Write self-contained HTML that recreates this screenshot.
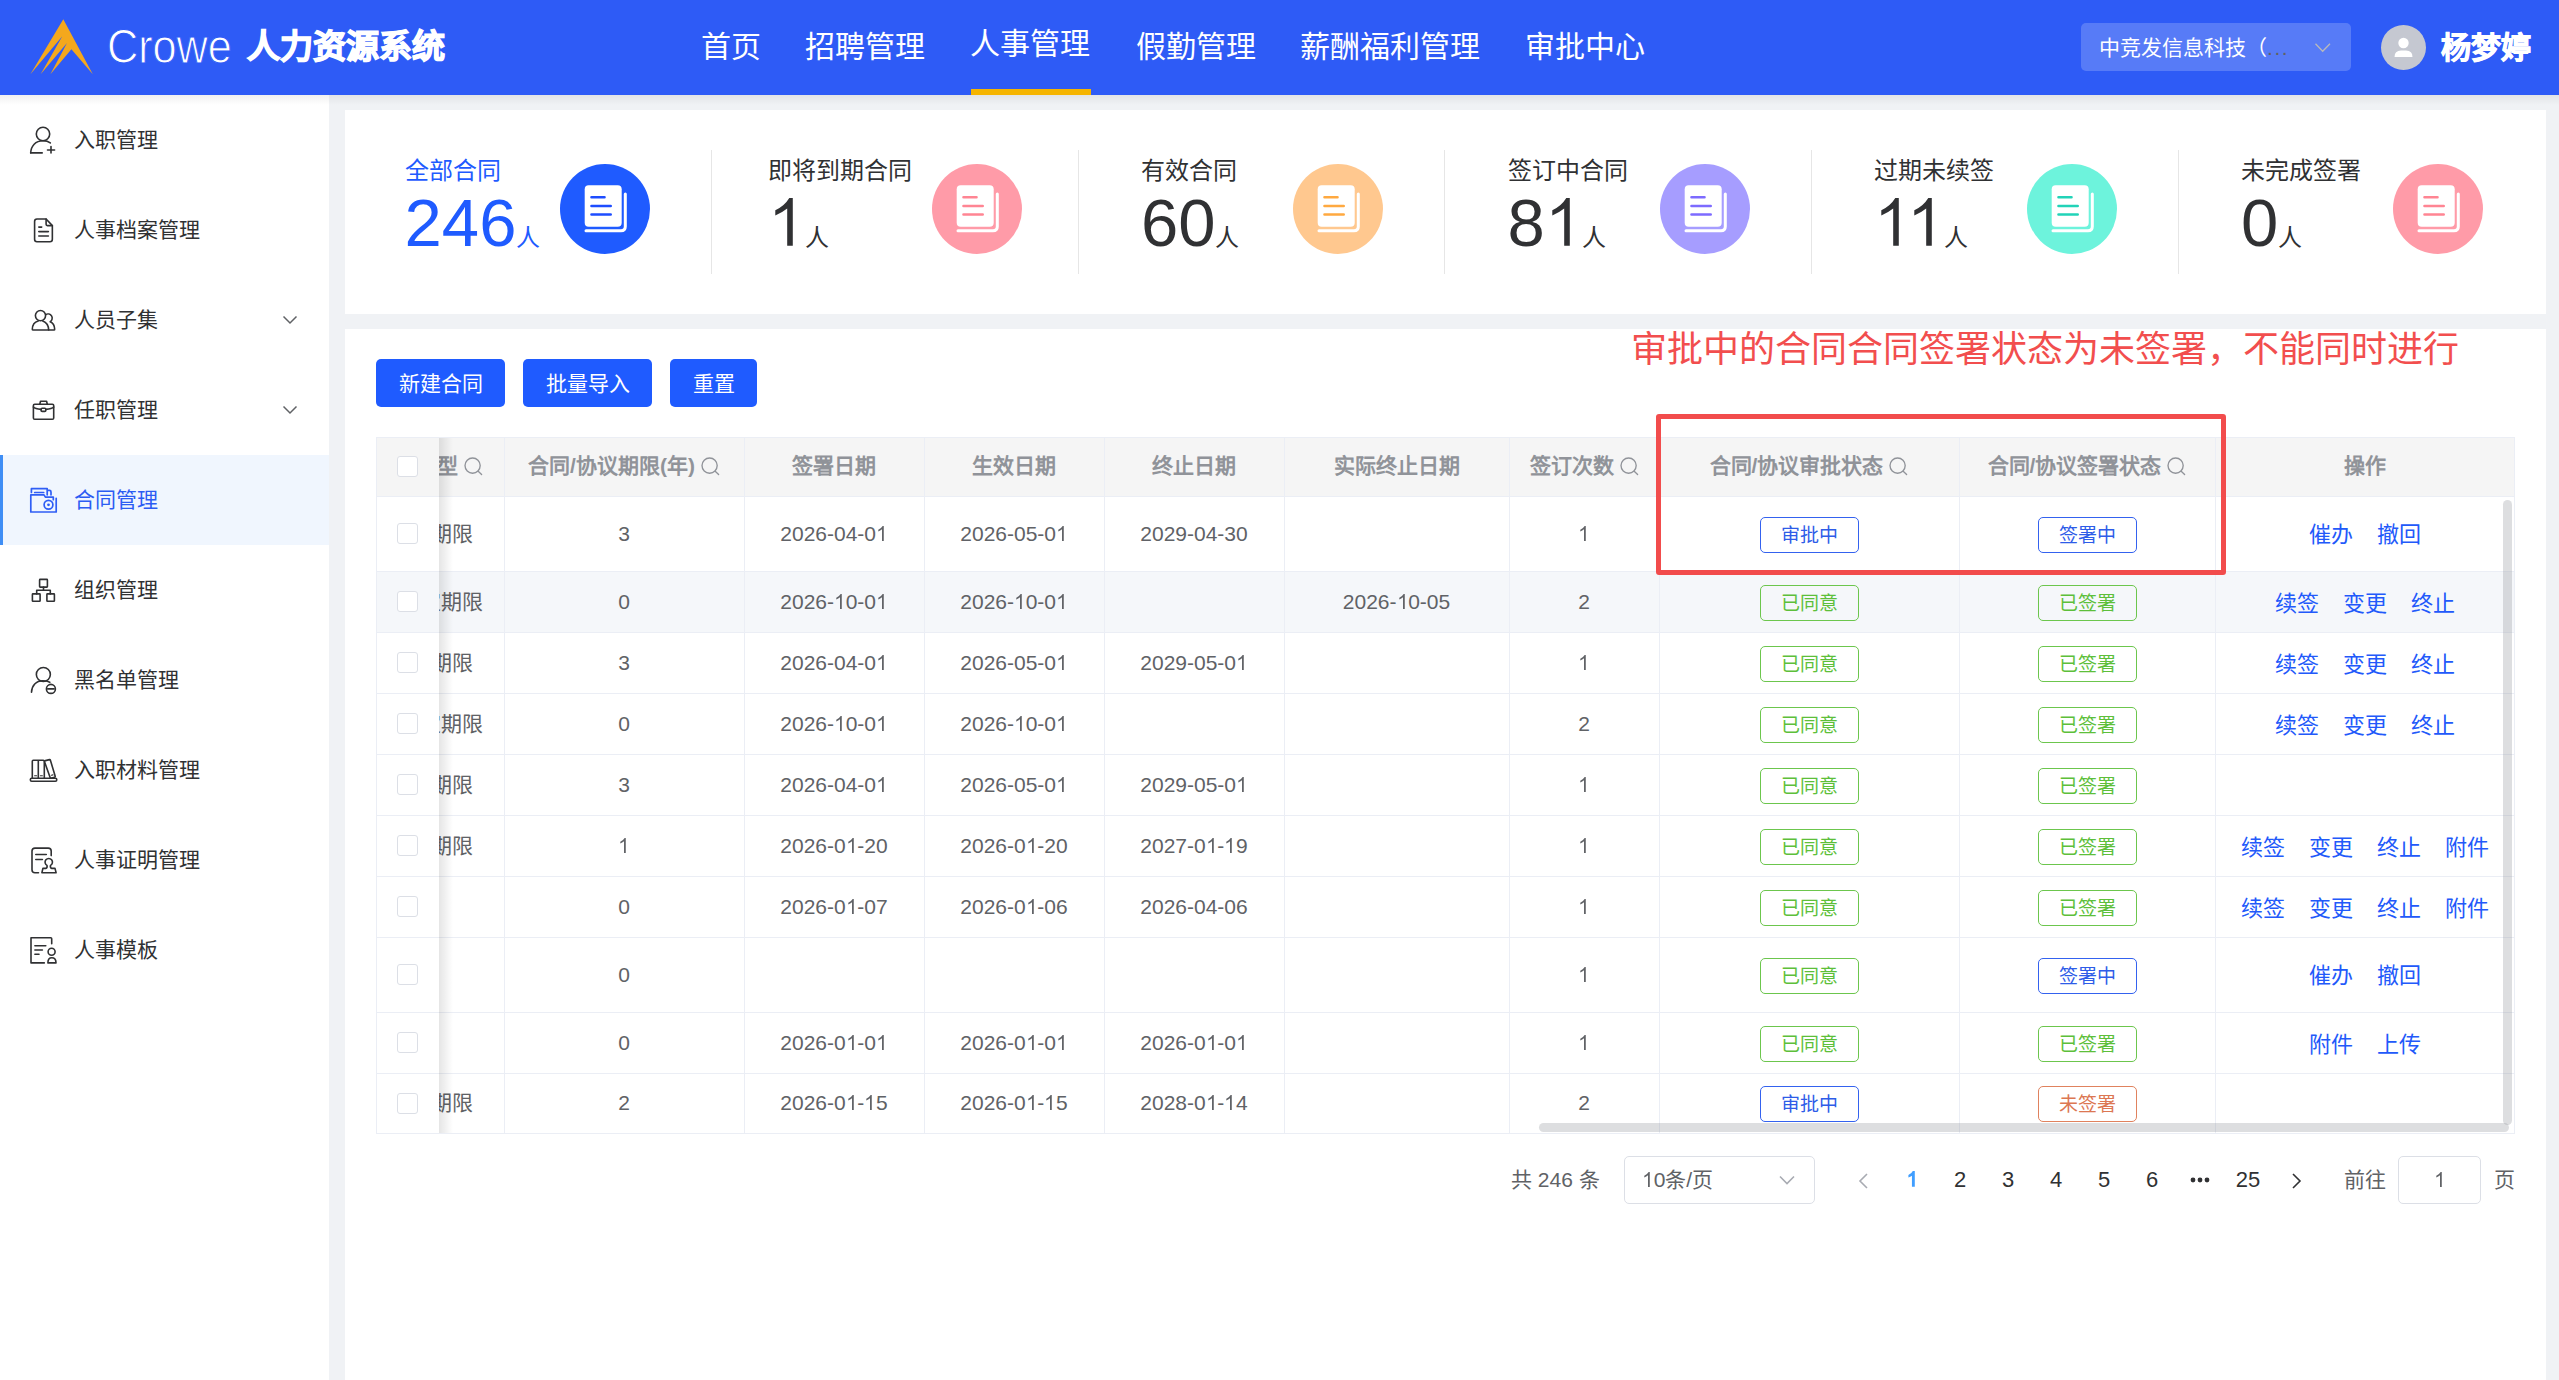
<!DOCTYPE html><html lang="zh-CN"><head><meta charset="utf-8"><style>
*{box-sizing:border-box;margin:0;padding:0}
html,body{width:2559px;height:1380px;overflow:hidden}
body{background:#f0f2f5;font-family:"Liberation Sans",sans-serif;position:relative;color:#303133}
.a{position:absolute;white-space:nowrap}
#hdr{position:absolute;left:0;top:0;width:2559px;height:95px;background:#2e5bf6}
.nav{position:absolute;top:0;height:95px;line-height:95px;font-size:30px;color:#fff}
#side{position:absolute;left:0;top:95px;width:329px;height:1285px;background:#fff}
.si{position:absolute;left:0;width:329px;height:90px}
.si .t{position:absolute;left:74px;top:0;line-height:90px;font-size:21px;color:#303133}
.si svg{position:absolute}
.card{position:absolute;background:#fff}
.lbl{font-size:24px;color:#303133;line-height:24px}
.num{font-size:70px;line-height:70px;color:#303133}
.ren{font-size:24px}
.circ{position:absolute;width:90px;height:90px;border-radius:50%}
.btn{position:absolute;top:359px;height:48px;line-height:50px;background:#1f5bff;color:#fff;font-size:21px;text-align:center;border-radius:5px}
.cell{position:absolute;text-align:center;font-size:21px;color:#606266;white-space:nowrap}
.hl{position:absolute;height:1px;background:#ebeef5}
.vl{position:absolute;width:1px;background:#ebeef5}
.tag{position:absolute;width:99px;height:36px;line-height:35px;border:1.5px solid;border-radius:5px;text-align:center;font-size:19px}
.tg{color:#5dbf3a;border-color:#6cc64d}
.tb{color:#2e5ce8;border-color:#3462ef}
.to{color:#dc7752;border-color:#e0825e}
.op{position:absolute;font-size:22px;color:#2e5bf0}
.cb{position:absolute;left:397px;width:21px;height:21px;border:1px solid #dcdfe6;border-radius:3px;background:#fff}
.pg{position:absolute;top:1156px;height:48px;line-height:48px;font-size:22px;color:#303133;text-align:center}
</style></head><body>
<div id="hdr">
<svg class="a" style="left:0;top:0" width="100" height="95" viewBox="0 0 100 95">
<path fill="#f4a81d" d="M63.3 19.2 L92.8 74.3 L71.4 49.3 L50.4 74.3 L67 43.1 L40.6 74.3 L62.3 36.2 L30.4 74.3 Z"/>
</svg>
<div class="a" style="left:107px;top:20px;font-size:48px;line-height:54px;color:#fff;transform:scaleX(0.9);transform-origin:0 0;-webkit-text-stroke:1px #2e5bf6">Crowe</div>
<div class="a" style="left:247px;top:27px;font-size:33px;line-height:40px;color:#fff;font-weight:bold;-webkit-text-stroke:1.3px #fff">人力资源系统</div>
<div class="nav" style="left:701.0px;top:-1px;">首页</div>
<div class="nav" style="left:805.0px;top:-1px;">招聘管理</div>
<div class="nav" style="left:970.0px;top:-4px;">人事管理</div>
<div class="nav" style="left:1135.5px;top:-1px;">假勤管理</div>
<div class="nav" style="left:1299.5px;top:-1px;">薪酬福利管理</div>
<div class="nav" style="left:1524.5px;top:-1px;">审批中心</div>
<div class="a" style="left:971px;top:89px;width:120px;height:6px;background:#f5b400"></div>
<div class="a" style="left:2081px;top:23px;width:270px;height:48px;border-radius:5px;background:rgba(255,255,255,0.2)"></div>
<div class="a" style="left:2099px;top:24px;line-height:48px;font-size:21px;color:#fff">中竞发信息科技（<span style="color:#626262;letter-spacing:1.6px">...</span></div>
<svg class="a" style="left:2314px;top:42px" width="18" height="12" viewBox="0 0 18 12"><path d="M1.5 1.8 L8.7 9.3 L16 1.8" fill="none" stroke="#b9b9bb" stroke-width="1.3"/></svg>
<div class="a" style="left:2381px;top:25px;width:45px;height:45px;border-radius:50%;background:#c5c8d1"></div>
<svg class="a" style="left:2381px;top:25px" width="45" height="45" viewBox="0 0 45 45"><circle cx="22.5" cy="18" r="5.2" fill="#fff"/><path d="M13.5 32 Q13.5 25.5 20 25.5 L25 25.5 Q31.5 25.5 31.5 32 Z" fill="#fff"/></svg>
<div class="a" style="left:2441px;top:25px;line-height:46px;font-size:30px;color:#fff;font-weight:bold;-webkit-text-stroke:0.9px #fff">杨梦婷</div>
</div>
<div class="a" style="left:0;top:95px;width:2559px;height:10px;background:linear-gradient(rgba(0,0,0,0.06),rgba(0,0,0,0));z-index:5"></div>
<div id="side">
<div class="si" style="top:0px">
<svg style="left:26px;top:27px" width="36" height="36" viewBox="0 0 36 36"><g fill="none" stroke="#303133" stroke-width="1.6" stroke-linecap="round" stroke-linejoin="round"><circle cx="17" cy="12" r="6.7"/><path d="M4.7 30.9 C5 24 9.5 18.7 17 18.7 Q21.5 18.7 24.3 20.9"/><path d="M4.7 30.9 H16.2"/><path d="M25 24.6 V31 M21.5 28 H28.6"/></g></svg>
<div class="t">入职管理</div>
</div>
<div class="si" style="top:90px">
<svg style="left:26px;top:27px" width="36" height="36" viewBox="0 0 36 36"><g fill="none" stroke="#303133" stroke-width="1.6" stroke-linecap="round" stroke-linejoin="round"><path d="M20.1 7 H11 Q8.6 7 8.6 9.4 V27.3 Q8.6 29.7 11 29.7 H24 Q26.35 29.7 26.35 27.3 V13.6 Z"/><path d="M20.1 7 V12.3 Q20.1 13.6 21.4 13.6 H26.35"/><path d="M12.8 15.1 H15.7 M12.8 19.6 H22.4 M12.8 24 H22.4"/></g></svg>
<div class="t">人事档案管理</div>
</div>
<div class="si" style="top:180px">
<svg style="left:26px;top:27px" width="36" height="36" viewBox="0 0 36 36"><g fill="none" stroke="#303133" stroke-width="1.6" stroke-linecap="round" stroke-linejoin="round"><circle cx="14.5" cy="13.6" r="5.1"/><path d="M12.2 19 Q6.5 20.5 6.3 27.3 Q6.3 28 7.3 28 H22.7 Q22.4 21 16.8 19"/><path d="M19.7 12.6 A4.2 4.2 0 1 1 24.2 19.8 Q28.5 21.5 28.7 27.3 Q28.7 28 28 28 H22.7"/></g></svg>
<div class="t">人员子集</div>
<svg style="left:282px;top:39px" width="16" height="12" viewBox="0 0 16 12"><path d="M1.5 2.5 L8 9 L14.5 2.5" fill="none" stroke="#606266" stroke-width="1.5"/></svg>
</div>
<div class="si" style="top:270px">
<svg style="left:26px;top:27px" width="36" height="36" viewBox="0 0 36 36"><g fill="none" stroke="#303133" stroke-width="1.6" stroke-linecap="round" stroke-linejoin="round"><rect x="7.4" y="12.3" width="20.3" height="15" rx="1.3"/><path d="M13.8 12.3 L14.5 9.3 H20.6 L21.3 12.3"/><path d="M7.4 15.1 Q9 16.6 15.1 17.4 M19.8 17.4 Q26 16.6 27.7 15.1"/><rect x="15.1" y="16.3" width="4.7" height="3.1" rx="1"/></g></svg>
<div class="t">任职管理</div>
<svg style="left:282px;top:39px" width="16" height="12" viewBox="0 0 16 12"><path d="M1.5 2.5 L8 9 L14.5 2.5" fill="none" stroke="#606266" stroke-width="1.5"/></svg>
</div>
<div class="si" style="top:360px;background:#f0f6fe">
<div class="a" style="left:0;top:0;width:3px;height:90px;background:#3f8ef5"></div>
<svg style="left:26px;top:27px" width="36" height="36" viewBox="0 0 36 36"><g fill="none" stroke="#2f5ef5" stroke-width="1.7" stroke-linejoin="round" stroke-linecap="round"><path d="M27.3 17.7 V15.1 H19.4 L18 12.9 H4.8 V30 H30.2 V16.3"/><path d="M5.4 10.5 V6.7 H21.2 V12.8 M21.2 8.4 H23.5 Q25 8.4 25 10 V12.8"/><path d="M8.7 10.5 H17.7"/><circle cx="22.5" cy="22.8" r="4.4"/></g><circle cx="22.5" cy="22.8" r="1.4" fill="#2f5ef5"/></svg>
<div class="t" style="color:#2b5cf3">合同管理</div></div>
<div class="si" style="top:450px">
<svg style="left:26px;top:27px" width="36" height="36" viewBox="0 0 36 36"><g fill="none" stroke="#303133" stroke-width="1.6" stroke-linecap="round" stroke-linejoin="round"><rect x="13.6" y="7.4" width="7.8" height="7.7" rx="0.6"/><rect x="6.4" y="21.9" width="7.7" height="7.4" rx="0.6"/><rect x="20.9" y="21.9" width="7.5" height="7.4" rx="0.6"/><path d="M17.5 15.1 V18.3 M10.7 21.9 V18.3 H24.3 V21.9"/></g></svg>
<div class="t">组织管理</div>
</div>
<div class="si" style="top:540px">
<svg style="left:26px;top:27px" width="36" height="36" viewBox="0 0 36 36"><g fill="none" stroke="#303133" stroke-width="1.6" stroke-linecap="round" stroke-linejoin="round"><circle cx="17.35" cy="12.5" r="7"/><path d="M5.5 30.3 C5.8 23.5 10 18.8 17 18.8 Q21 18.8 23.8 20.3"/><circle cx="24.9" cy="26.9" r="4.5"/><path d="M21.7 26.9 H28.1"/></g></svg>
<div class="t">黑名单管理</div>
</div>
<div class="si" style="top:630px">
<svg style="left:26px;top:27px" width="36" height="36" viewBox="0 0 36 36"><g fill="none" stroke="#303133" stroke-width="1.6" stroke-linecap="round" stroke-linejoin="round"><rect x="4.3" y="26.3" width="26.5" height="2.9" rx="1.4"/><path d="M6.3 26.3 V9.3 Q6.3 8.3 7.3 8.3 H17.3 Q18.3 8.3 18.3 9.3 V26.3 M12.3 8.3 V26.3"/><path d="M18.5 9.7 Q18.7 8.8 19.4 8.6 L23.5 7.6 Q24.2 7.5 24.4 8.2 L29.2 24.3 Q29.3 25 28.6 25.2 L25.6 26 M18.5 9.7 L24.3 26.1"/><path d="M8.6 23.7 H10.6 M14.4 23.7 H16.4 M25.4 23.3 L27 22.9" stroke-width="1.1"/></g></svg>
<div class="t">入职材料管理</div>
</div>
<div class="si" style="top:720px">
<svg style="left:26px;top:27px" width="36" height="36" viewBox="0 0 36 36"><g fill="none" stroke="#303133" stroke-width="1.6" stroke-linecap="round" stroke-linejoin="round"><path d="M12.5 30.8 H9 Q6 30.8 6 27.8 V9.1 Q6 6.1 9 6.1 H22.2 Q25.2 6.1 25.2 9.1 V13.6"/><path d="M9.8 12.5 H20.3 M9.8 17.5 H16.4"/><path d="M21 23.4 A3.7 3.7 0 1 1 24.5 23.4 Q23.9 25.9 25.8 26.4 H29 L30.1 30.8 H15.9 L16.9 26.4 H19.7 Q21.6 25.9 21 23.4 Z"/></g></svg>
<div class="t">人事证明管理</div>
</div>
<div class="si" style="top:810px">
<svg style="left:26px;top:27px" width="36" height="36" viewBox="0 0 36 36"><g fill="none" stroke="#303133" stroke-width="1.6" stroke-linecap="round" stroke-linejoin="round"><path d="M18.3 30.9 H5 V5.7 H24.7 Q25.7 5.7 25.7 6.7 V11.7"/><path d="M8.9 13.8 H19.8 M8.9 18 H16.4 M8.9 22.3 H13"/><circle cx="25.6" cy="19.7" r="3.5"/><path d="M21.9 30.9 Q21.9 25.8 25.8 25.8 Q30 25.8 30 30.9 Z"/></g></svg>
<div class="t">人事模板</div>
</div>
</div>
<div class="card" style="left:345px;top:110px;width:2201px;height:204px">
<div class="a" style="left:-0.8px;top:0;width:366.8px;height:204px;display:flex;justify-content:center;align-items:flex-start;padding-top:54px">
<div style="position:relative;min-width:132px;height:90px;margin-right:22px;left:-1px">
<div class="lbl a" style="left:0;top:-5px;color:#1f5bff">全部合同</div>
<div class="a" style="left:0px;top:24px;color:#1f5bff;line-height:70px;font-size:67px"><span>2</span><span>4</span><span>6</span><span class="ren">人</span></div>
<div style="visibility:hidden;font-size:24px">全部合同</div>
</div>
<div style="position:relative;width:90px;height:90px;border-radius:50%;background:#1f5bff"><svg class="a" style="left:0;top:0" width="90" height="90" viewBox="0 0 90 90"><rect x="24.7" y="21.3" width="37" height="41.5" rx="4" fill="#fff"/><path d="M65.3 30 V62.5 Q65.3 66.8 61 66.8 H26" fill="none" stroke="#fff" stroke-width="3" stroke-linecap="round"/><path d="M31.5 33.3 H44.5 M31.5 42 H50.7 M31.5 50.5 H50.7" fill="none" stroke="#1e4dff" stroke-width="2.6" stroke-linecap="round"/></svg></div>
</div>
<div class="a" style="left:366px;top:40px;width:1px;height:124px;background:#e6e6e6"></div>
<div class="a" style="left:366.0px;top:0;width:366.8px;height:204px;display:flex;justify-content:center;align-items:flex-start;padding-top:54px">
<div style="position:relative;min-width:132px;height:90px;margin-right:22px;left:1.7px">
<div class="lbl a" style="left:0;top:-5px;color:#303133">即将到期合同</div>
<div class="a" style="left:0px;top:24px;color:#303133;line-height:70px;font-size:67px"><svg style="display:inline-block;vertical-align:baseline;" width="37.2" height="47.7" viewBox="0 0 37.2 47.7"><path transform="translate(7.3 0)" d="M17.5 0 V47.7 H11.9 V10.5 Q6.5 14.8 0 17.5 V12.2 Q9 8.2 14 0 Z" fill="#303133"/></svg><span class="ren">人</span></div>
<div style="visibility:hidden;font-size:24px">即将到期合同</div>
</div>
<div style="position:relative;width:90px;height:90px;border-radius:50%;background:#ff9ba8"><svg class="a" style="left:0;top:0" width="90" height="90" viewBox="0 0 90 90"><rect x="24.7" y="21.3" width="37" height="41.5" rx="4" fill="#fff"/><path d="M65.3 30 V62.5 Q65.3 66.8 61 66.8 H26" fill="none" stroke="#fff" stroke-width="3" stroke-linecap="round"/><path d="M31.5 33.3 H44.5 M31.5 42 H50.7 M31.5 50.5 H50.7" fill="none" stroke="#ff8593" stroke-width="2.6" stroke-linecap="round"/></svg></div>
</div>
<div class="a" style="left:733px;top:40px;width:1px;height:124px;background:#e6e6e6"></div>
<div class="a" style="left:732.8px;top:0;width:366.8px;height:204px;display:flex;justify-content:center;align-items:flex-start;padding-top:54px">
<div style="position:relative;min-width:132px;height:90px;margin-right:22px;left:1.7px">
<div class="lbl a" style="left:0;top:-5px;color:#303133">有效合同</div>
<div class="a" style="left:0px;top:24px;color:#303133;line-height:70px;font-size:67px"><span>6</span><span>0</span><span class="ren">人</span></div>
<div style="visibility:hidden;font-size:24px">有效合同</div>
</div>
<div style="position:relative;width:90px;height:90px;border-radius:50%;background:#ffc88f"><svg class="a" style="left:0;top:0" width="90" height="90" viewBox="0 0 90 90"><rect x="24.7" y="21.3" width="37" height="41.5" rx="4" fill="#fff"/><path d="M65.3 30 V62.5 Q65.3 66.8 61 66.8 H26" fill="none" stroke="#fff" stroke-width="3" stroke-linecap="round"/><path d="M31.5 33.3 H44.5 M31.5 42 H50.7 M31.5 50.5 H50.7" fill="none" stroke="#ffa940" stroke-width="2.6" stroke-linecap="round"/></svg></div>
</div>
<div class="a" style="left:1099px;top:40px;width:1px;height:124px;background:#e6e6e6"></div>
<div class="a" style="left:1099.5px;top:0;width:366.8px;height:204px;display:flex;justify-content:center;align-items:flex-start;padding-top:54px">
<div style="position:relative;min-width:132px;height:90px;margin-right:22px;left:1.7px">
<div class="lbl a" style="left:0;top:-5px;color:#303133">签订中合同</div>
<div class="a" style="left:0px;top:24px;color:#303133;line-height:70px;font-size:67px"><span>8</span><svg style="display:inline-block;vertical-align:baseline;" width="37.2" height="47.7" viewBox="0 0 37.2 47.7"><path transform="translate(7.3 0)" d="M17.5 0 V47.7 H11.9 V10.5 Q6.5 14.8 0 17.5 V12.2 Q9 8.2 14 0 Z" fill="#303133"/></svg><span class="ren">人</span></div>
<div style="visibility:hidden;font-size:24px">签订中合同</div>
</div>
<div style="position:relative;width:90px;height:90px;border-radius:50%;background:#a69dff"><svg class="a" style="left:0;top:0" width="90" height="90" viewBox="0 0 90 90"><rect x="24.7" y="21.3" width="37" height="41.5" rx="4" fill="#fff"/><path d="M65.3 30 V62.5 Q65.3 66.8 61 66.8 H26" fill="none" stroke="#fff" stroke-width="3" stroke-linecap="round"/><path d="M31.5 33.3 H44.5 M31.5 42 H50.7 M31.5 50.5 H50.7" fill="none" stroke="#7d6bff" stroke-width="2.6" stroke-linecap="round"/></svg></div>
</div>
<div class="a" style="left:1466px;top:40px;width:1px;height:124px;background:#e6e6e6"></div>
<div class="a" style="left:1466.2px;top:0;width:366.8px;height:204px;display:flex;justify-content:center;align-items:flex-start;padding-top:54px">
<div style="position:relative;min-width:132px;height:90px;margin-right:22px;left:1.7px">
<div class="lbl a" style="left:0;top:-5px;color:#303133">过期未续签</div>
<div class="a" style="left:0px;top:24px;color:#303133;line-height:70px;font-size:67px"><svg style="display:inline-block;vertical-align:baseline;" width="37.2" height="47.7" viewBox="0 0 37.2 47.7"><path transform="translate(7.3 0)" d="M17.5 0 V47.7 H11.9 V10.5 Q6.5 14.8 0 17.5 V12.2 Q9 8.2 14 0 Z" fill="#303133"/></svg><svg style="display:inline-block;vertical-align:baseline;margin-left:-4.9px;" width="37.2" height="47.7" viewBox="0 0 37.2 47.7"><path transform="translate(7.3 0)" d="M17.5 0 V47.7 H11.9 V10.5 Q6.5 14.8 0 17.5 V12.2 Q9 8.2 14 0 Z" fill="#303133"/></svg><span class="ren">人</span></div>
<div style="visibility:hidden;font-size:24px">过期未续签</div>
</div>
<div style="position:relative;width:90px;height:90px;border-radius:50%;background:#6df3dc"><svg class="a" style="left:0;top:0" width="90" height="90" viewBox="0 0 90 90"><rect x="24.7" y="21.3" width="37" height="41.5" rx="4" fill="#fff"/><path d="M65.3 30 V62.5 Q65.3 66.8 61 66.8 H26" fill="none" stroke="#fff" stroke-width="3" stroke-linecap="round"/><path d="M31.5 33.3 H44.5 M31.5 42 H50.7 M31.5 50.5 H50.7" fill="none" stroke="#22d3b8" stroke-width="2.6" stroke-linecap="round"/></svg></div>
</div>
<div class="a" style="left:1833px;top:40px;width:1px;height:124px;background:#e6e6e6"></div>
<div class="a" style="left:1833.0px;top:0;width:366.8px;height:204px;display:flex;justify-content:center;align-items:flex-start;padding-top:54px">
<div style="position:relative;min-width:132px;height:90px;margin-right:22px;left:1.7px">
<div class="lbl a" style="left:0;top:-5px;color:#303133">未完成签署</div>
<div class="a" style="left:0px;top:24px;color:#303133;line-height:70px;font-size:67px"><span>0</span><span class="ren">人</span></div>
<div style="visibility:hidden;font-size:24px">未完成签署</div>
</div>
<div style="position:relative;width:90px;height:90px;border-radius:50%;background:#ff9ba8"><svg class="a" style="left:0;top:0" width="90" height="90" viewBox="0 0 90 90"><rect x="24.7" y="21.3" width="37" height="41.5" rx="4" fill="#fff"/><path d="M65.3 30 V62.5 Q65.3 66.8 61 66.8 H26" fill="none" stroke="#fff" stroke-width="3" stroke-linecap="round"/><path d="M31.5 33.3 H44.5 M31.5 42 H50.7 M31.5 50.5 H50.7" fill="none" stroke="#ff8593" stroke-width="2.6" stroke-linecap="round"/></svg></div>
</div>
</div>
<div class="card" style="left:345px;top:329px;width:2201px;height:1100px"></div>
<div class="btn" style="left:376px;width:129px">新建合同</div>
<div class="btn" style="left:523px;width:129px">批量导入</div>
<div class="btn" style="left:670px;width:87px">重置</div>
<div class="a" style="left:1631px;top:328px;font-size:36px;line-height:44px;color:#f24e4e">审批中的合同合同签署状态为未签署，不能同时进行</div>
<div class="a" style="left:376px;top:437px;width:2138px;height:59px;background:#f5f5f5"></div>
<div class="a" style="left:376px;top:571px;width:2138px;height:61px;background:#f5f7fa"></div>
<div class="hl" style="left:376px;top:437px;width:2139px"></div>
<div class="hl" style="left:376px;top:496px;width:2139px"></div>
<div class="hl" style="left:376px;top:571px;width:2139px"></div>
<div class="hl" style="left:376px;top:632px;width:2139px"></div>
<div class="hl" style="left:376px;top:693px;width:2139px"></div>
<div class="hl" style="left:376px;top:754px;width:2139px"></div>
<div class="hl" style="left:376px;top:815px;width:2139px"></div>
<div class="hl" style="left:376px;top:876px;width:2139px"></div>
<div class="hl" style="left:376px;top:937px;width:2139px"></div>
<div class="hl" style="left:376px;top:1012px;width:2139px"></div>
<div class="hl" style="left:376px;top:1073px;width:2139px"></div>
<div class="hl" style="left:376px;top:1133px;width:2139px"></div>
<div class="vl" style="left:376px;top:437px;height:696px"></div>
<div class="vl" style="left:504px;top:437px;height:696px"></div>
<div class="vl" style="left:744px;top:437px;height:696px"></div>
<div class="vl" style="left:924px;top:437px;height:696px"></div>
<div class="vl" style="left:1104px;top:437px;height:696px"></div>
<div class="vl" style="left:1284px;top:437px;height:696px"></div>
<div class="vl" style="left:1509px;top:437px;height:696px"></div>
<div class="vl" style="left:1659px;top:437px;height:696px"></div>
<div class="vl" style="left:1959px;top:437px;height:696px"></div>
<div class="vl" style="left:2215px;top:437px;height:696px"></div>
<div class="vl" style="left:2514px;top:437px;height:696px"></div>
<div class="cell" style="left:504px;top:437px;width:240px;line-height:57px;font-weight:bold;color:#909399">合同/协议期限(年)<svg style="display:inline-block;vertical-align:-3px;margin-left:6px" width="19" height="19" viewBox="0 0 19 19"><circle cx="8.6" cy="8.6" r="7.6" fill="none" stroke="#909399" stroke-width="1.35"/><path d="M14.2 14.3 L17.6 17.5" stroke="#909399" stroke-width="1.35" stroke-linecap="round"/></svg></div>
<div class="cell" style="left:744px;top:437px;width:180px;line-height:57px;font-weight:bold;color:#909399">签署日期</div>
<div class="cell" style="left:924px;top:437px;width:180px;line-height:57px;font-weight:bold;color:#909399">生效日期</div>
<div class="cell" style="left:1104px;top:437px;width:180px;line-height:57px;font-weight:bold;color:#909399">终止日期</div>
<div class="cell" style="left:1284px;top:437px;width:225px;line-height:57px;font-weight:bold;color:#909399">实际终止日期</div>
<div class="cell" style="left:1509px;top:437px;width:150px;line-height:57px;font-weight:bold;color:#909399">签订次数<svg style="display:inline-block;vertical-align:-3px;margin-left:6px" width="19" height="19" viewBox="0 0 19 19"><circle cx="8.6" cy="8.6" r="7.6" fill="none" stroke="#909399" stroke-width="1.35"/><path d="M14.2 14.3 L17.6 17.5" stroke="#909399" stroke-width="1.35" stroke-linecap="round"/></svg></div>
<div class="cell" style="left:1659px;top:437px;width:300px;line-height:57px;font-weight:bold;color:#909399">合同/协议审批状态<svg style="display:inline-block;vertical-align:-3px;margin-left:6px" width="19" height="19" viewBox="0 0 19 19"><circle cx="8.6" cy="8.6" r="7.6" fill="none" stroke="#909399" stroke-width="1.35"/><path d="M14.2 14.3 L17.6 17.5" stroke="#909399" stroke-width="1.35" stroke-linecap="round"/></svg></div>
<div class="cell" style="left:1959px;top:437px;width:256px;line-height:57px;font-weight:bold;color:#909399">合同/协议签署状态<svg style="display:inline-block;vertical-align:-3px;margin-left:6px" width="19" height="19" viewBox="0 0 19 19"><circle cx="8.6" cy="8.6" r="7.6" fill="none" stroke="#909399" stroke-width="1.35"/><path d="M14.2 14.3 L17.6 17.5" stroke="#909399" stroke-width="1.35" stroke-linecap="round"/></svg></div>
<div class="cell" style="left:2215px;top:437px;width:299px;line-height:57px;font-weight:bold;color:#909399">操作</div>
<div class="cell" style="left:439px;top:437px;width:65px;height:59px;overflow:hidden"><div style="position:absolute;right:21px;top:0;line-height:57px;font-weight:bold;color:#909399">类型<svg style="display:inline-block;vertical-align:-3px;margin-left:6px" width="19" height="19" viewBox="0 0 19 19"><circle cx="8.6" cy="8.6" r="7.6" fill="none" stroke="#909399" stroke-width="1.35"/><path d="M14.2 14.3 L17.6 17.5" stroke="#909399" stroke-width="1.35" stroke-linecap="round"/></svg></div></div>
<div class="cb" style="top:456px"></div>
<div class="cb" style="top:523.0px"></div>
<div class="cell" style="left:439px;top:496px;width:65px;height:75px;overflow:hidden"><div style="position:absolute;right:31.0px;top:0;line-height:75px">固定期限</div></div>
<div class="cell" style="left:504px;top:496px;width:240px;line-height:75px">3</div>
<div class="cell" style="left:744px;top:496px;width:180px;line-height:75px">2026-04-0<svg style="display:inline-block;vertical-align:baseline" width="11.68" height="14.95" viewBox="0 0 37.25 47.7"><path transform="translate(7.3 0)" d="M17.5 0 V47.7 H11.9 V10.5 Q6.5 14.8 0 17.5 V12.2 Q9 8.2 14 0 Z" fill="currentColor"/></svg></div>
<div class="cell" style="left:924px;top:496px;width:180px;line-height:75px">2026-05-0<svg style="display:inline-block;vertical-align:baseline" width="11.68" height="14.95" viewBox="0 0 37.25 47.7"><path transform="translate(7.3 0)" d="M17.5 0 V47.7 H11.9 V10.5 Q6.5 14.8 0 17.5 V12.2 Q9 8.2 14 0 Z" fill="currentColor"/></svg></div>
<div class="cell" style="left:1104px;top:496px;width:180px;line-height:75px">2029-04-30</div>
<div class="cell" style="left:1509px;top:496px;width:150px;line-height:75px"><svg style="display:inline-block;vertical-align:baseline" width="11.68" height="14.95" viewBox="0 0 37.25 47.7"><path transform="translate(7.3 0)" d="M17.5 0 V47.7 H11.9 V10.5 Q6.5 14.8 0 17.5 V12.2 Q9 8.2 14 0 Z" fill="currentColor"/></svg></div>
<div class="tag tb" style="left:1759.5px;top:516.5px">审批中</div>
<div class="tag tb" style="left:2037.5px;top:516.5px">签署中</div>
<div class="a" style="left:2215px;top:494.5px;width:299px;height:75px;display:flex;justify-content:center;align-items:center;gap:24px;font-size:22px;color:#2259fa;padding-bottom:1px"><span>催办</span><span>撤回</span></div>
<div class="cb" style="top:591.0px"></div>
<div class="cell" style="left:439px;top:571px;width:65px;height:61px;overflow:hidden"><div style="position:absolute;right:21.5px;top:0;line-height:61px">无固定期限</div></div>
<div class="cell" style="left:504px;top:571px;width:240px;line-height:61px">0</div>
<div class="cell" style="left:744px;top:571px;width:180px;line-height:61px">2026-<svg style="display:inline-block;vertical-align:baseline" width="11.68" height="14.95" viewBox="0 0 37.25 47.7"><path transform="translate(7.3 0)" d="M17.5 0 V47.7 H11.9 V10.5 Q6.5 14.8 0 17.5 V12.2 Q9 8.2 14 0 Z" fill="currentColor"/></svg>0-0<svg style="display:inline-block;vertical-align:baseline" width="11.68" height="14.95" viewBox="0 0 37.25 47.7"><path transform="translate(7.3 0)" d="M17.5 0 V47.7 H11.9 V10.5 Q6.5 14.8 0 17.5 V12.2 Q9 8.2 14 0 Z" fill="currentColor"/></svg></div>
<div class="cell" style="left:924px;top:571px;width:180px;line-height:61px">2026-<svg style="display:inline-block;vertical-align:baseline" width="11.68" height="14.95" viewBox="0 0 37.25 47.7"><path transform="translate(7.3 0)" d="M17.5 0 V47.7 H11.9 V10.5 Q6.5 14.8 0 17.5 V12.2 Q9 8.2 14 0 Z" fill="currentColor"/></svg>0-0<svg style="display:inline-block;vertical-align:baseline" width="11.68" height="14.95" viewBox="0 0 37.25 47.7"><path transform="translate(7.3 0)" d="M17.5 0 V47.7 H11.9 V10.5 Q6.5 14.8 0 17.5 V12.2 Q9 8.2 14 0 Z" fill="currentColor"/></svg></div>
<div class="cell" style="left:1284px;top:571px;width:225px;line-height:61px">2026-<svg style="display:inline-block;vertical-align:baseline" width="11.68" height="14.95" viewBox="0 0 37.25 47.7"><path transform="translate(7.3 0)" d="M17.5 0 V47.7 H11.9 V10.5 Q6.5 14.8 0 17.5 V12.2 Q9 8.2 14 0 Z" fill="currentColor"/></svg>0-05</div>
<div class="cell" style="left:1509px;top:571px;width:150px;line-height:61px">2</div>
<div class="tag tg" style="left:1759.5px;top:584.5px">已同意</div>
<div class="tag tg" style="left:2037.5px;top:584.5px">已签署</div>
<div class="a" style="left:2215px;top:571.0px;width:299px;height:61px;display:flex;justify-content:center;align-items:center;gap:24px;font-size:22px;color:#2259fa;padding-bottom:1px"><span>续签</span><span>变更</span><span>终止</span></div>
<div class="cb" style="top:652.0px"></div>
<div class="cell" style="left:439px;top:632px;width:65px;height:61px;overflow:hidden"><div style="position:absolute;right:31.0px;top:0;line-height:61px">固定期限</div></div>
<div class="cell" style="left:504px;top:632px;width:240px;line-height:61px">3</div>
<div class="cell" style="left:744px;top:632px;width:180px;line-height:61px">2026-04-0<svg style="display:inline-block;vertical-align:baseline" width="11.68" height="14.95" viewBox="0 0 37.25 47.7"><path transform="translate(7.3 0)" d="M17.5 0 V47.7 H11.9 V10.5 Q6.5 14.8 0 17.5 V12.2 Q9 8.2 14 0 Z" fill="currentColor"/></svg></div>
<div class="cell" style="left:924px;top:632px;width:180px;line-height:61px">2026-05-0<svg style="display:inline-block;vertical-align:baseline" width="11.68" height="14.95" viewBox="0 0 37.25 47.7"><path transform="translate(7.3 0)" d="M17.5 0 V47.7 H11.9 V10.5 Q6.5 14.8 0 17.5 V12.2 Q9 8.2 14 0 Z" fill="currentColor"/></svg></div>
<div class="cell" style="left:1104px;top:632px;width:180px;line-height:61px">2029-05-0<svg style="display:inline-block;vertical-align:baseline" width="11.68" height="14.95" viewBox="0 0 37.25 47.7"><path transform="translate(7.3 0)" d="M17.5 0 V47.7 H11.9 V10.5 Q6.5 14.8 0 17.5 V12.2 Q9 8.2 14 0 Z" fill="currentColor"/></svg></div>
<div class="cell" style="left:1509px;top:632px;width:150px;line-height:61px"><svg style="display:inline-block;vertical-align:baseline" width="11.68" height="14.95" viewBox="0 0 37.25 47.7"><path transform="translate(7.3 0)" d="M17.5 0 V47.7 H11.9 V10.5 Q6.5 14.8 0 17.5 V12.2 Q9 8.2 14 0 Z" fill="currentColor"/></svg></div>
<div class="tag tg" style="left:1759.5px;top:645.5px">已同意</div>
<div class="tag tg" style="left:2037.5px;top:645.5px">已签署</div>
<div class="a" style="left:2215px;top:632.0px;width:299px;height:61px;display:flex;justify-content:center;align-items:center;gap:24px;font-size:22px;color:#2259fa;padding-bottom:1px"><span>续签</span><span>变更</span><span>终止</span></div>
<div class="cb" style="top:713.0px"></div>
<div class="cell" style="left:439px;top:693px;width:65px;height:61px;overflow:hidden"><div style="position:absolute;right:21.5px;top:0;line-height:61px">无固定期限</div></div>
<div class="cell" style="left:504px;top:693px;width:240px;line-height:61px">0</div>
<div class="cell" style="left:744px;top:693px;width:180px;line-height:61px">2026-<svg style="display:inline-block;vertical-align:baseline" width="11.68" height="14.95" viewBox="0 0 37.25 47.7"><path transform="translate(7.3 0)" d="M17.5 0 V47.7 H11.9 V10.5 Q6.5 14.8 0 17.5 V12.2 Q9 8.2 14 0 Z" fill="currentColor"/></svg>0-0<svg style="display:inline-block;vertical-align:baseline" width="11.68" height="14.95" viewBox="0 0 37.25 47.7"><path transform="translate(7.3 0)" d="M17.5 0 V47.7 H11.9 V10.5 Q6.5 14.8 0 17.5 V12.2 Q9 8.2 14 0 Z" fill="currentColor"/></svg></div>
<div class="cell" style="left:924px;top:693px;width:180px;line-height:61px">2026-<svg style="display:inline-block;vertical-align:baseline" width="11.68" height="14.95" viewBox="0 0 37.25 47.7"><path transform="translate(7.3 0)" d="M17.5 0 V47.7 H11.9 V10.5 Q6.5 14.8 0 17.5 V12.2 Q9 8.2 14 0 Z" fill="currentColor"/></svg>0-0<svg style="display:inline-block;vertical-align:baseline" width="11.68" height="14.95" viewBox="0 0 37.25 47.7"><path transform="translate(7.3 0)" d="M17.5 0 V47.7 H11.9 V10.5 Q6.5 14.8 0 17.5 V12.2 Q9 8.2 14 0 Z" fill="currentColor"/></svg></div>
<div class="cell" style="left:1509px;top:693px;width:150px;line-height:61px">2</div>
<div class="tag tg" style="left:1759.5px;top:706.5px">已同意</div>
<div class="tag tg" style="left:2037.5px;top:706.5px">已签署</div>
<div class="a" style="left:2215px;top:693.0px;width:299px;height:61px;display:flex;justify-content:center;align-items:center;gap:24px;font-size:22px;color:#2259fa;padding-bottom:1px"><span>续签</span><span>变更</span><span>终止</span></div>
<div class="cb" style="top:774.0px"></div>
<div class="cell" style="left:439px;top:754px;width:65px;height:61px;overflow:hidden"><div style="position:absolute;right:31.0px;top:0;line-height:61px">固定期限</div></div>
<div class="cell" style="left:504px;top:754px;width:240px;line-height:61px">3</div>
<div class="cell" style="left:744px;top:754px;width:180px;line-height:61px">2026-04-0<svg style="display:inline-block;vertical-align:baseline" width="11.68" height="14.95" viewBox="0 0 37.25 47.7"><path transform="translate(7.3 0)" d="M17.5 0 V47.7 H11.9 V10.5 Q6.5 14.8 0 17.5 V12.2 Q9 8.2 14 0 Z" fill="currentColor"/></svg></div>
<div class="cell" style="left:924px;top:754px;width:180px;line-height:61px">2026-05-0<svg style="display:inline-block;vertical-align:baseline" width="11.68" height="14.95" viewBox="0 0 37.25 47.7"><path transform="translate(7.3 0)" d="M17.5 0 V47.7 H11.9 V10.5 Q6.5 14.8 0 17.5 V12.2 Q9 8.2 14 0 Z" fill="currentColor"/></svg></div>
<div class="cell" style="left:1104px;top:754px;width:180px;line-height:61px">2029-05-0<svg style="display:inline-block;vertical-align:baseline" width="11.68" height="14.95" viewBox="0 0 37.25 47.7"><path transform="translate(7.3 0)" d="M17.5 0 V47.7 H11.9 V10.5 Q6.5 14.8 0 17.5 V12.2 Q9 8.2 14 0 Z" fill="currentColor"/></svg></div>
<div class="cell" style="left:1509px;top:754px;width:150px;line-height:61px"><svg style="display:inline-block;vertical-align:baseline" width="11.68" height="14.95" viewBox="0 0 37.25 47.7"><path transform="translate(7.3 0)" d="M17.5 0 V47.7 H11.9 V10.5 Q6.5 14.8 0 17.5 V12.2 Q9 8.2 14 0 Z" fill="currentColor"/></svg></div>
<div class="tag tg" style="left:1759.5px;top:767.5px">已同意</div>
<div class="tag tg" style="left:2037.5px;top:767.5px">已签署</div>
<div class="cb" style="top:835.0px"></div>
<div class="cell" style="left:439px;top:815px;width:65px;height:61px;overflow:hidden"><div style="position:absolute;right:31.0px;top:0;line-height:61px">固定期限</div></div>
<div class="cell" style="left:504px;top:815px;width:240px;line-height:61px"><svg style="display:inline-block;vertical-align:baseline" width="11.68" height="14.95" viewBox="0 0 37.25 47.7"><path transform="translate(7.3 0)" d="M17.5 0 V47.7 H11.9 V10.5 Q6.5 14.8 0 17.5 V12.2 Q9 8.2 14 0 Z" fill="currentColor"/></svg></div>
<div class="cell" style="left:744px;top:815px;width:180px;line-height:61px">2026-0<svg style="display:inline-block;vertical-align:baseline" width="11.68" height="14.95" viewBox="0 0 37.25 47.7"><path transform="translate(7.3 0)" d="M17.5 0 V47.7 H11.9 V10.5 Q6.5 14.8 0 17.5 V12.2 Q9 8.2 14 0 Z" fill="currentColor"/></svg>-20</div>
<div class="cell" style="left:924px;top:815px;width:180px;line-height:61px">2026-0<svg style="display:inline-block;vertical-align:baseline" width="11.68" height="14.95" viewBox="0 0 37.25 47.7"><path transform="translate(7.3 0)" d="M17.5 0 V47.7 H11.9 V10.5 Q6.5 14.8 0 17.5 V12.2 Q9 8.2 14 0 Z" fill="currentColor"/></svg>-20</div>
<div class="cell" style="left:1104px;top:815px;width:180px;line-height:61px">2027-0<svg style="display:inline-block;vertical-align:baseline" width="11.68" height="14.95" viewBox="0 0 37.25 47.7"><path transform="translate(7.3 0)" d="M17.5 0 V47.7 H11.9 V10.5 Q6.5 14.8 0 17.5 V12.2 Q9 8.2 14 0 Z" fill="currentColor"/></svg>-<svg style="display:inline-block;vertical-align:baseline" width="11.68" height="14.95" viewBox="0 0 37.25 47.7"><path transform="translate(7.3 0)" d="M17.5 0 V47.7 H11.9 V10.5 Q6.5 14.8 0 17.5 V12.2 Q9 8.2 14 0 Z" fill="currentColor"/></svg>9</div>
<div class="cell" style="left:1509px;top:815px;width:150px;line-height:61px"><svg style="display:inline-block;vertical-align:baseline" width="11.68" height="14.95" viewBox="0 0 37.25 47.7"><path transform="translate(7.3 0)" d="M17.5 0 V47.7 H11.9 V10.5 Q6.5 14.8 0 17.5 V12.2 Q9 8.2 14 0 Z" fill="currentColor"/></svg></div>
<div class="tag tg" style="left:1759.5px;top:828.5px">已同意</div>
<div class="tag tg" style="left:2037.5px;top:828.5px">已签署</div>
<div class="a" style="left:2215px;top:815.0px;width:299px;height:61px;display:flex;justify-content:center;align-items:center;gap:24px;font-size:22px;color:#2259fa;padding-bottom:1px"><span>续签</span><span>变更</span><span>终止</span><span>附件</span></div>
<div class="cb" style="top:896.0px"></div>
<div class="cell" style="left:504px;top:876px;width:240px;line-height:61px">0</div>
<div class="cell" style="left:744px;top:876px;width:180px;line-height:61px">2026-0<svg style="display:inline-block;vertical-align:baseline" width="11.68" height="14.95" viewBox="0 0 37.25 47.7"><path transform="translate(7.3 0)" d="M17.5 0 V47.7 H11.9 V10.5 Q6.5 14.8 0 17.5 V12.2 Q9 8.2 14 0 Z" fill="currentColor"/></svg>-07</div>
<div class="cell" style="left:924px;top:876px;width:180px;line-height:61px">2026-0<svg style="display:inline-block;vertical-align:baseline" width="11.68" height="14.95" viewBox="0 0 37.25 47.7"><path transform="translate(7.3 0)" d="M17.5 0 V47.7 H11.9 V10.5 Q6.5 14.8 0 17.5 V12.2 Q9 8.2 14 0 Z" fill="currentColor"/></svg>-06</div>
<div class="cell" style="left:1104px;top:876px;width:180px;line-height:61px">2026-04-06</div>
<div class="cell" style="left:1509px;top:876px;width:150px;line-height:61px"><svg style="display:inline-block;vertical-align:baseline" width="11.68" height="14.95" viewBox="0 0 37.25 47.7"><path transform="translate(7.3 0)" d="M17.5 0 V47.7 H11.9 V10.5 Q6.5 14.8 0 17.5 V12.2 Q9 8.2 14 0 Z" fill="currentColor"/></svg></div>
<div class="tag tg" style="left:1759.5px;top:889.5px">已同意</div>
<div class="tag tg" style="left:2037.5px;top:889.5px">已签署</div>
<div class="a" style="left:2215px;top:876.0px;width:299px;height:61px;display:flex;justify-content:center;align-items:center;gap:24px;font-size:22px;color:#2259fa;padding-bottom:1px"><span>续签</span><span>变更</span><span>终止</span><span>附件</span></div>
<div class="cb" style="top:964.0px"></div>
<div class="cell" style="left:504px;top:937px;width:240px;line-height:75px">0</div>
<div class="cell" style="left:1509px;top:937px;width:150px;line-height:75px"><svg style="display:inline-block;vertical-align:baseline" width="11.68" height="14.95" viewBox="0 0 37.25 47.7"><path transform="translate(7.3 0)" d="M17.5 0 V47.7 H11.9 V10.5 Q6.5 14.8 0 17.5 V12.2 Q9 8.2 14 0 Z" fill="currentColor"/></svg></div>
<div class="tag tg" style="left:1759.5px;top:957.5px">已同意</div>
<div class="tag tb" style="left:2037.5px;top:957.5px">签署中</div>
<div class="a" style="left:2215px;top:935.5px;width:299px;height:75px;display:flex;justify-content:center;align-items:center;gap:24px;font-size:22px;color:#2259fa;padding-bottom:1px"><span>催办</span><span>撤回</span></div>
<div class="cb" style="top:1032.0px"></div>
<div class="cell" style="left:504px;top:1012px;width:240px;line-height:61px">0</div>
<div class="cell" style="left:744px;top:1012px;width:180px;line-height:61px">2026-0<svg style="display:inline-block;vertical-align:baseline" width="11.68" height="14.95" viewBox="0 0 37.25 47.7"><path transform="translate(7.3 0)" d="M17.5 0 V47.7 H11.9 V10.5 Q6.5 14.8 0 17.5 V12.2 Q9 8.2 14 0 Z" fill="currentColor"/></svg>-0<svg style="display:inline-block;vertical-align:baseline" width="11.68" height="14.95" viewBox="0 0 37.25 47.7"><path transform="translate(7.3 0)" d="M17.5 0 V47.7 H11.9 V10.5 Q6.5 14.8 0 17.5 V12.2 Q9 8.2 14 0 Z" fill="currentColor"/></svg></div>
<div class="cell" style="left:924px;top:1012px;width:180px;line-height:61px">2026-0<svg style="display:inline-block;vertical-align:baseline" width="11.68" height="14.95" viewBox="0 0 37.25 47.7"><path transform="translate(7.3 0)" d="M17.5 0 V47.7 H11.9 V10.5 Q6.5 14.8 0 17.5 V12.2 Q9 8.2 14 0 Z" fill="currentColor"/></svg>-0<svg style="display:inline-block;vertical-align:baseline" width="11.68" height="14.95" viewBox="0 0 37.25 47.7"><path transform="translate(7.3 0)" d="M17.5 0 V47.7 H11.9 V10.5 Q6.5 14.8 0 17.5 V12.2 Q9 8.2 14 0 Z" fill="currentColor"/></svg></div>
<div class="cell" style="left:1104px;top:1012px;width:180px;line-height:61px">2026-0<svg style="display:inline-block;vertical-align:baseline" width="11.68" height="14.95" viewBox="0 0 37.25 47.7"><path transform="translate(7.3 0)" d="M17.5 0 V47.7 H11.9 V10.5 Q6.5 14.8 0 17.5 V12.2 Q9 8.2 14 0 Z" fill="currentColor"/></svg>-0<svg style="display:inline-block;vertical-align:baseline" width="11.68" height="14.95" viewBox="0 0 37.25 47.7"><path transform="translate(7.3 0)" d="M17.5 0 V47.7 H11.9 V10.5 Q6.5 14.8 0 17.5 V12.2 Q9 8.2 14 0 Z" fill="currentColor"/></svg></div>
<div class="cell" style="left:1509px;top:1012px;width:150px;line-height:61px"><svg style="display:inline-block;vertical-align:baseline" width="11.68" height="14.95" viewBox="0 0 37.25 47.7"><path transform="translate(7.3 0)" d="M17.5 0 V47.7 H11.9 V10.5 Q6.5 14.8 0 17.5 V12.2 Q9 8.2 14 0 Z" fill="currentColor"/></svg></div>
<div class="tag tg" style="left:1759.5px;top:1025.5px">已同意</div>
<div class="tag tg" style="left:2037.5px;top:1025.5px">已签署</div>
<div class="a" style="left:2215px;top:1012.0px;width:299px;height:61px;display:flex;justify-content:center;align-items:center;gap:24px;font-size:22px;color:#2259fa;padding-bottom:1px"><span>附件</span><span>上传</span></div>
<div class="cb" style="top:1092.5px"></div>
<div class="cell" style="left:439px;top:1073px;width:65px;height:60px;overflow:hidden"><div style="position:absolute;right:31.0px;top:0;line-height:60px">固定期限</div></div>
<div class="cell" style="left:504px;top:1073px;width:240px;line-height:60px">2</div>
<div class="cell" style="left:744px;top:1073px;width:180px;line-height:60px">2026-0<svg style="display:inline-block;vertical-align:baseline" width="11.68" height="14.95" viewBox="0 0 37.25 47.7"><path transform="translate(7.3 0)" d="M17.5 0 V47.7 H11.9 V10.5 Q6.5 14.8 0 17.5 V12.2 Q9 8.2 14 0 Z" fill="currentColor"/></svg>-<svg style="display:inline-block;vertical-align:baseline" width="11.68" height="14.95" viewBox="0 0 37.25 47.7"><path transform="translate(7.3 0)" d="M17.5 0 V47.7 H11.9 V10.5 Q6.5 14.8 0 17.5 V12.2 Q9 8.2 14 0 Z" fill="currentColor"/></svg>5</div>
<div class="cell" style="left:924px;top:1073px;width:180px;line-height:60px">2026-0<svg style="display:inline-block;vertical-align:baseline" width="11.68" height="14.95" viewBox="0 0 37.25 47.7"><path transform="translate(7.3 0)" d="M17.5 0 V47.7 H11.9 V10.5 Q6.5 14.8 0 17.5 V12.2 Q9 8.2 14 0 Z" fill="currentColor"/></svg>-<svg style="display:inline-block;vertical-align:baseline" width="11.68" height="14.95" viewBox="0 0 37.25 47.7"><path transform="translate(7.3 0)" d="M17.5 0 V47.7 H11.9 V10.5 Q6.5 14.8 0 17.5 V12.2 Q9 8.2 14 0 Z" fill="currentColor"/></svg>5</div>
<div class="cell" style="left:1104px;top:1073px;width:180px;line-height:60px">2028-0<svg style="display:inline-block;vertical-align:baseline" width="11.68" height="14.95" viewBox="0 0 37.25 47.7"><path transform="translate(7.3 0)" d="M17.5 0 V47.7 H11.9 V10.5 Q6.5 14.8 0 17.5 V12.2 Q9 8.2 14 0 Z" fill="currentColor"/></svg>-<svg style="display:inline-block;vertical-align:baseline" width="11.68" height="14.95" viewBox="0 0 37.25 47.7"><path transform="translate(7.3 0)" d="M17.5 0 V47.7 H11.9 V10.5 Q6.5 14.8 0 17.5 V12.2 Q9 8.2 14 0 Z" fill="currentColor"/></svg>4</div>
<div class="cell" style="left:1509px;top:1073px;width:150px;line-height:60px">2</div>
<div class="tag tb" style="left:1759.5px;top:1086.0px">审批中</div>
<div class="tag to" style="left:2037.5px;top:1086.0px">未签署</div>
<div class="a" style="left:439px;top:438px;width:14px;height:695px;background:linear-gradient(90deg,rgba(0,0,0,0.10),rgba(0,0,0,0))"></div>
<div class="a" style="left:2503px;top:500px;width:9px;height:625px;border-radius:5px;background:rgba(144,147,153,0.3)"></div>
<div class="a" style="left:1539px;top:1123px;width:970px;height:9px;border-radius:5px;background:rgba(144,147,153,0.3)"></div>
<div class="a" style="left:1656px;top:414px;width:570px;height:161px;border:5px solid #f24c4c;border-radius:3px"></div>
<div class="a" style="left:1511px;top:1156px;line-height:48px;font-size:21px;color:#606266">共 246 条</div>
<div class="a" style="left:1624px;top:1156px;width:191px;height:48px;border:1.5px solid #dcdfe6;border-radius:5px;background:#fff"></div>
<div class="a" style="left:1642px;top:1156px;line-height:48px;font-size:21px;color:#606266"><svg style="display:inline-block;vertical-align:baseline" width="11.68" height="14.95" viewBox="0 0 37.25 47.7"><path transform="translate(7.3 0)" d="M17.5 0 V47.7 H11.9 V10.5 Q6.5 14.8 0 17.5 V12.2 Q9 8.2 14 0 Z" fill="currentColor"/></svg>0条/页</div>
<svg class="a" style="left:1778px;top:1174px" width="18" height="12" viewBox="0 0 18 12"><path d="M2 2.5 L9 9.5 L16 2.5" fill="none" stroke="#a8abb2" stroke-width="1.6"/></svg>
<svg class="a" style="left:1856px;top:1172px" width="14" height="18" viewBox="0 0 14 18"><path d="M11 2 L4 9 L11 16" fill="none" stroke="#a8abb2" stroke-width="1.6"/></svg>
<svg class="a" style="left:2290px;top:1172px" width="14" height="18" viewBox="0 0 14 18"><path d="M3 2 L10 9 L3 16" fill="none" stroke="#303133" stroke-width="1.6"/></svg>
<div class="pg" style="left:1888px;width:48px;color:#409eff;font-weight:bold"><svg style="display:inline-block;vertical-align:baseline" width="12.23" height="15.66" viewBox="0 0 37.25 47.7"><path transform="translate(7.3 0)" d="M19.5 0 V47.7 H10.8 V14.5 Q6 17.8 0 20 V12.5 Q9.5 8 13.5 0 Z" fill="currentColor"/></svg></div>
<div class="pg" style="left:1936px;width:48px;">2</div>
<div class="pg" style="left:1984px;width:48px;">3</div>
<div class="pg" style="left:2032px;width:48px;">4</div>
<div class="pg" style="left:2080px;width:48px;">5</div>
<div class="pg" style="left:2128px;width:48px;">6</div>
<div class="pg" style="left:2224px;width:48px;">25</div>
<div class="a" style="left:2190px;top:1177px;width:20px;height:6px"><svg style="display:block" width="20" height="6" viewBox="0 0 20 6"><circle cx="3" cy="3" r="2.4" fill="#303133"/><circle cx="10" cy="3" r="2.4" fill="#303133"/><circle cx="17" cy="3" r="2.4" fill="#303133"/></svg></div>
<div class="a" style="left:2344px;top:1156px;line-height:48px;font-size:21px;color:#606266">前往</div>
<div class="a" style="left:2398px;top:1156px;width:83px;height:48px;border:1.5px solid #dcdfe6;border-radius:5px;background:#fff;text-align:center;line-height:45px;font-size:21px;color:#606266"><svg style="display:inline-block;vertical-align:baseline" width="11.68" height="14.95" viewBox="0 0 37.25 47.7"><path transform="translate(7.3 0)" d="M17.5 0 V47.7 H11.9 V10.5 Q6.5 14.8 0 17.5 V12.2 Q9 8.2 14 0 Z" fill="currentColor"/></svg></div>
<div class="a" style="left:2494px;top:1156px;line-height:48px;font-size:21px;color:#606266">页</div>
</body></html>
